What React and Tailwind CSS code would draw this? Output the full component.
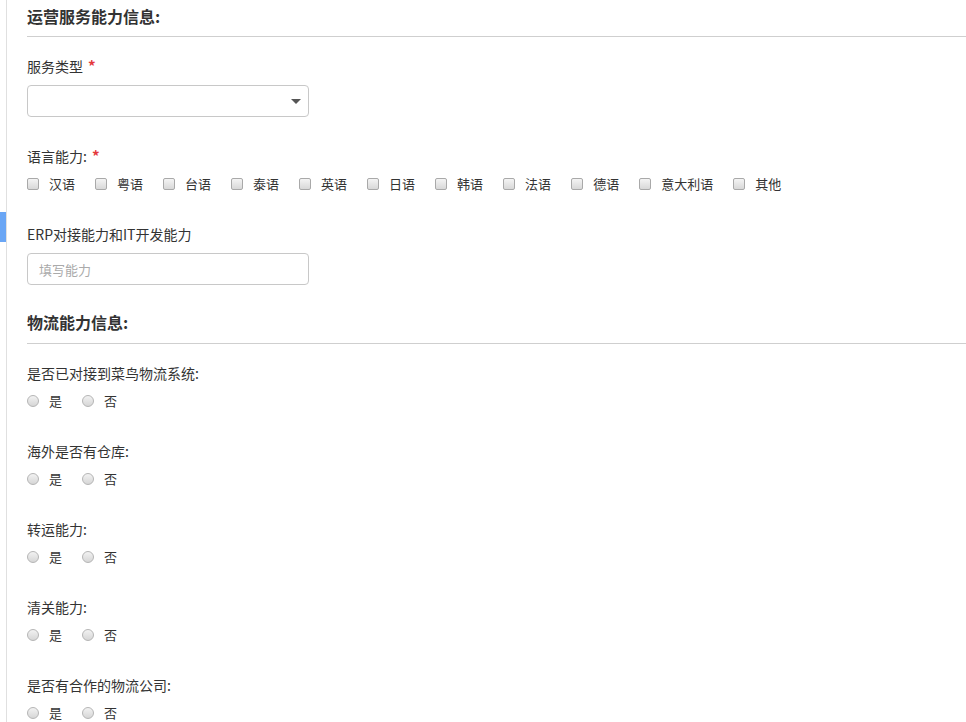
const languages = ["汉语", "粤语", "台语", "泰语", "英语", "日语", "韩语", "法语", "德语", "意大利语", "其他"];

const logistics = [
    "是否已对接到菜鸟物流系统:",
    "海外是否有仓库:",
    "转运能力:",
    "清关能力:",
    "是否有合作的物流公司:",
];

function Checkbox({ label }) {
    return (
        <label className="flex items-center mr-[20px] cursor-pointer">
            <span className="w-[12px] h-[12px] rounded-[2px] border border-[#a9a9a9] bg-gradient-to-b from-[#f4f4f4] to-[#d8d8d8]" />
            <span className="ml-[10px]">{label}</span>
        </label>
    );
}

function Radio({ label }) {
    return (
        <label className="flex items-center mr-[20px] cursor-pointer">
            <span className="w-[12px] h-[12px] rounded-full border border-[#b5b5b5] bg-gradient-to-b from-[#f2f2f2] to-[#d6d6d6]" />
            <span className="ml-[10px]">{label}</span>
        </label>
    );
}

function Required() {
    return <span className="text-[#e4393c] font-bold ml-[5px] text-[15px]">*</span>;
}

export default function App() {
    return (
        <div
            className="flex min-h-[722px] bg-white text-[13px] leading-[20px] text-[#333]"
            style={{ fontFamily: '"Noto Sans CJK SC", "Noto Sans", sans-serif' }}
        >
            {/* left rail */}
            <div className="w-[7px] shrink-0 border-r border-[#e0e0e0] pt-[212px]">
                <div className="w-[6px] h-[30px] bg-[#6aa6f5]" />
            </div>

            <div className="flex-1 pl-[20px] pb-[20px]">
                {/* 运营服务能力信息 */}
                <div className="h-[37px] flex items-end pb-[9px] border-b border-[#cfcfcf]">
                    <h2 className="text-[16px] leading-[22px] font-bold text-[#333]">运营服务能力信息:</h2>
                </div>

                <div className="mt-[19px] text-[14px]">
                    服务类型<Required />
                </div>
                <div className="mt-[9px] w-[282px] h-[32px] border border-[#c8c8c8] rounded-[4px] flex items-center justify-end pr-[7px]">
                    <svg width="10" height="5" viewBox="0 0 10 5">
                        <path d="M0 0 L10 0 L5 5 Z" fill="#555" />
                    </svg>
                </div>

                <div className="mt-[29px] text-[14px]">
                    语言能力:<Required />
                </div>
                <div className="mt-[8px] flex items-center">
                    {languages.map((l) => (
                        <Checkbox key={l} label={l} />
                    ))}
                </div>

                <div className="mt-[30px] text-[14px]">ERP对接能力和IT开发能力</div>
                <input
                    className="mt-[9px] block w-[282px] h-[32px] border border-[#c8c8c8] rounded-[4px] px-[11px] text-[13px] outline-none placeholder:text-[#aaa]"
                    placeholder="填写能力"
                />

                {/* 物流能力信息 */}
                <div className="mt-[20px] h-[39px] flex items-end pb-[10px] border-b border-[#cfcfcf]">
                    <h2 className="text-[16px] leading-[22px] font-bold text-[#333]">物流能力信息:</h2>
                </div>

                <div className="flex flex-col gap-[30px] mt-[19px]">
                    {logistics.map((q) => (
                        <div key={q} className="flex flex-col gap-[8px]">
                            <div className="text-[14px]">{q}</div>
                            <div className="flex items-center">
                                <Radio label="是" />
                                <Radio label="否" />
                            </div>
                        </div>
                    ))}
                </div>
            </div>
        </div>
    );
}
